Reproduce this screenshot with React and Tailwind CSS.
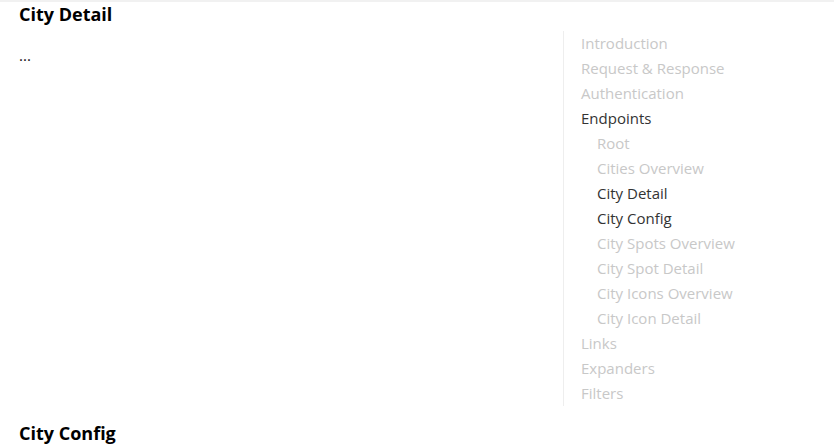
import React from 'react';

const navItems = [
  { label: 'Introduction', level: 0 },
  { label: 'Request & Response', level: 0 },
  { label: 'Authentication', level: 0 },
  { label: 'Endpoints', level: 0, active: true },
  { label: 'Root', level: 1 },
  { label: 'Cities Overview', level: 1 },
  { label: 'City Detail', level: 1, active: true },
  { label: 'City Config', level: 1, active: true },
  { label: 'City Spots Overview', level: 1 },
  { label: 'City Spot Detail', level: 1 },
  { label: 'City Icons Overview', level: 1 },
  { label: 'City Icon Detail', level: 1 },
  { label: 'Links', level: 0 },
  { label: 'Expanders', level: 0 },
  { label: 'Filters', level: 0 },
];

const App = () => {
  return (
    <div
      className="min-h-screen bg-white border-t-2 border-[#f1f1f1] text-[#111]"
      style={{ fontFamily: '"Open Sans", "Noto Sans", sans-serif' }}
    >
      {/* City Detail section */}
      <h2 className="px-[19px] text-[18px] leading-[24px] font-bold text-black">City Detail</h2>

      <div className="flex mt-[5px]">
        <div className="flex-1 px-[19px] pt-[12px] text-[15px] leading-[25px]">...</div>

        {/* Table of contents */}
        <nav className="w-[271px] border-l border-[#eeeeee] pl-[17px]">
          <ul className="flex flex-col">
            {navItems.map((item) => (
              <li
                key={item.label}
                className={`text-[15px] leading-[25px] ${item.level === 1 ? 'pl-[16px]' : ''} ${
                  item.active ? 'text-[#333333]' : 'text-[#c8c8c8]'
                }`}
              >
                {item.label}
              </li>
            ))}
          </ul>
        </nav>
      </div>

      {/* City Config section */}
      <h2 className="mt-[15px] px-[19px] text-[18px] leading-[24px] font-bold text-black">City Config</h2>
    </div>
  );
};

export default App;
